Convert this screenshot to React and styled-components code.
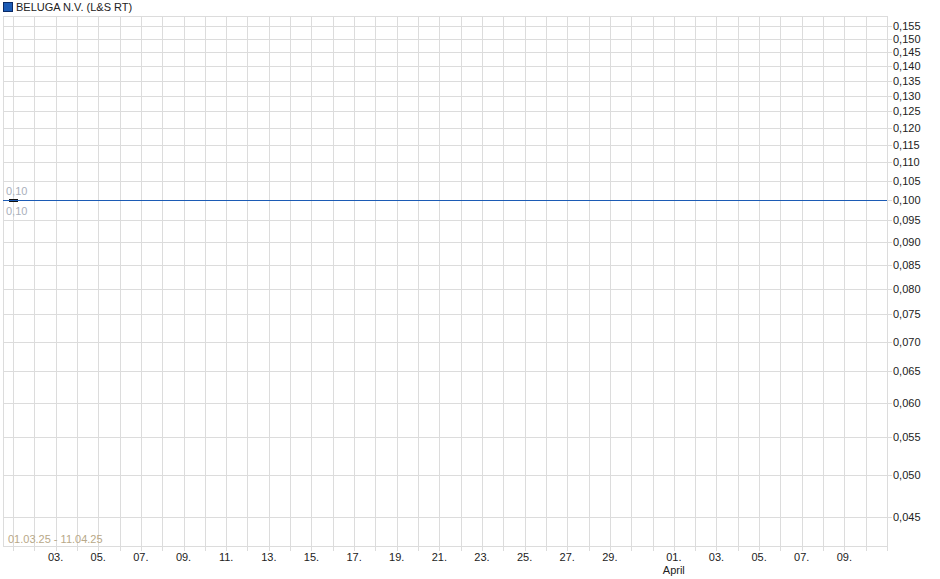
import React from 'react';
import styled, { createGlobalStyle } from 'styled-components';

const Global = createGlobalStyle`
  body { margin: 0; background: #fff; font-family: "Liberation Sans", Arial, sans-serif; }
`;

const Page = styled.div`
  width: 940px;
  height: 579px;
  display: flex;
  flex-direction: column;
`;

const Legend = styled.div`
  display: flex;
  align-items: center;
  gap: 3px;
  height: 13px;
  padding: 0 0 0 3px;
  font-size: 11px;
  color: #222;
`;

const Swatch = styled.span`
  width: 8px;
  height: 8px;
  background: #1c5bb5;
  border: 1px solid #0a2a66;
`;

const left = 3, right = 887, top = 16, bottom = 546;
const dayW = (right - 13) / 41;
const yOf = v => 26 + (Math.log(0.155) - Math.log(v)) * 397;
const levels = [];
for (let i = 155; i >= 45; i -= 5) levels.push(i / 1000);
const dayLabels = [
  [2, '03.'], [4, '05.'], [6, '07.'], [8, '09.'], [10, '11.'], [12, '13.'], [14, '15.'], [16, '17.'],
  [18, '19.'], [20, '21.'], [22, '23.'], [24, '25.'], [26, '27.'], [28, '29.'],
  [31, '01.'], [33, '03.'], [35, '05.'], [37, '07.'], [39, '09.'],
];

function Chart() {
  const xs = [];
  for (let d = 0; d <= 41; d++) xs.push(Math.round(13 + d * dayW) + 0.5);
  return (
    <svg width="940" height="566" style={{ display: 'block' }} fontFamily='"Liberation Sans", Arial, sans-serif' fontSize="11">
      <g stroke="#dcdcdc" strokeWidth="1">
        <rect x={left + 0.5} y={top - 13 + 0.5} width={right - left} height={bottom - top} fill="none" />
        {xs.map((x, i) => <line key={i} x1={x} x2={x} y1={top - 13} y2={bottom - 13 + 5} />)}
        {levels.map(v => {
          const y = Math.round(yOf(v)) - 13 + 0.5;
          return <line key={v} x1={left} x2={right + 5} y1={y} y2={y} />;
        })}
      </g>
      {levels.map(v => (
        <text key={v} x="893" y={yOf(v) - 13 + 4} fill="#222">{v.toFixed(3).replace('.', ',')}</text>
      ))}
      {dayLabels.map(([d, t]) => (
        <text key={d} x={13 + d * dayW} y="548" textAnchor="middle" fill="#222">{t}</text>
      ))}
      <text x={13 + 31 * dayW} y="561" textAnchor="middle" fill="#222">April</text>
      <line x1={left} x2={right} y1="187.5" y2="187.5" stroke="#1c5bb5" strokeWidth="1" />
      <line x1="9" x2="18" y1="186.5" y2="186.5" stroke="#111" />
      <line x1="9" x2="18" y1="188.5" y2="188.5" stroke="#111" />
      <text x="6" y="182" fill="#aab0bc">0,10</text>
      <text x="6" y="202" fill="#aab0bc">0,10</text>
      <text x="8" y="530" fill="#b8a888">01.03.25 - 11.04.25</text>
    </svg>
  );
}

export default function App() {
  return (
    <Page>
      <Global />
      <Legend><Swatch />BELUGA N.V. (L&amp;S RT)</Legend>
      <Chart />
    </Page>
  );
}
